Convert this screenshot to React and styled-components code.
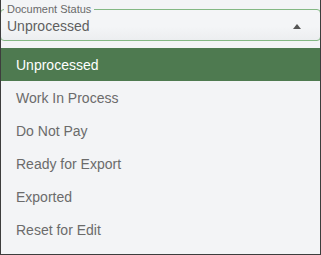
import React from 'react';
import styled, { createGlobalStyle } from 'styled-components';

const GlobalStyle = createGlobalStyle`
  html, body {
    margin: 0;
    padding: 0;
    background: #f3f4f6;
  }
  * {
    box-sizing: border-box;
  }
`;

const statuses = [
  'Unprocessed',
  'Work In Process',
  'Do Not Pay',
  'Ready for Export',
  'Exported',
  'Reset for Edit',
];

export default function App() {
  const selected = 'Unprocessed';
  return (
    <>
      <GlobalStyle />
      <Frame>
        <Field>
          <Legend>Document Status</Legend>
          <ValueRow>
            <Value>{selected}</Value>
            <Arrow />
          </ValueRow>
        </Field>
        <Menu>
          {statuses.map((it) => (
            <Option key={it} $active={it === selected}>
              {it}
            </Option>
          ))}
        </Menu>
      </Frame>
    </>
  );
}

const Frame = styled.div`
  width: 321px;
  height: 255px;
  padding-top: 3px;
  background: #f3f4f6;
  border: 1px solid #3d3d3d;
  border-top: none;
  overflow: hidden;
  font-family: 'Liberation Sans', Arial, sans-serif;
`;

const Field = styled.fieldset`
  margin: 0 -1px;
  padding: 0 6px 0 6px;
  border: 1px solid #84b884;
  border-radius: 4px;
  background: linear-gradient(#f4f5f7 55%, #eceef0);
  min-width: 0;
`;

const Legend = styled.legend`
  margin-left: -3px;
  padding: 0 3px;
  font-size: 11px;
  line-height: 13px;
  color: #6a6a6a;
`;

const ValueRow = styled.div`
  display: flex;
  align-items: center;
  justify-content: space-between;
  height: 24px;
  padding: 0 13px 4px 0;
`;

const Value = styled.span`
  font-size: 14px;
  color: #5f5f5f;
`;

const Arrow = styled.span`
  width: 0;
  height: 0;
  border-left: 4px solid transparent;
  border-right: 4px solid transparent;
  border-bottom: 5px solid #555;
`;

const Menu = styled.div`
  margin-top: 7px;
  display: flex;
  flex-direction: column;
`;

const Option = styled.div`
  height: 33px;
  display: flex;
  align-items: center;
  padding-left: 15px;
  font-size: 14px;
  color: ${(p) => (p.$active ? '#ffffff' : '#6b6b6b')};
  background: ${(p) => (p.$active ? '#4e7a50' : 'transparent')};
`;
